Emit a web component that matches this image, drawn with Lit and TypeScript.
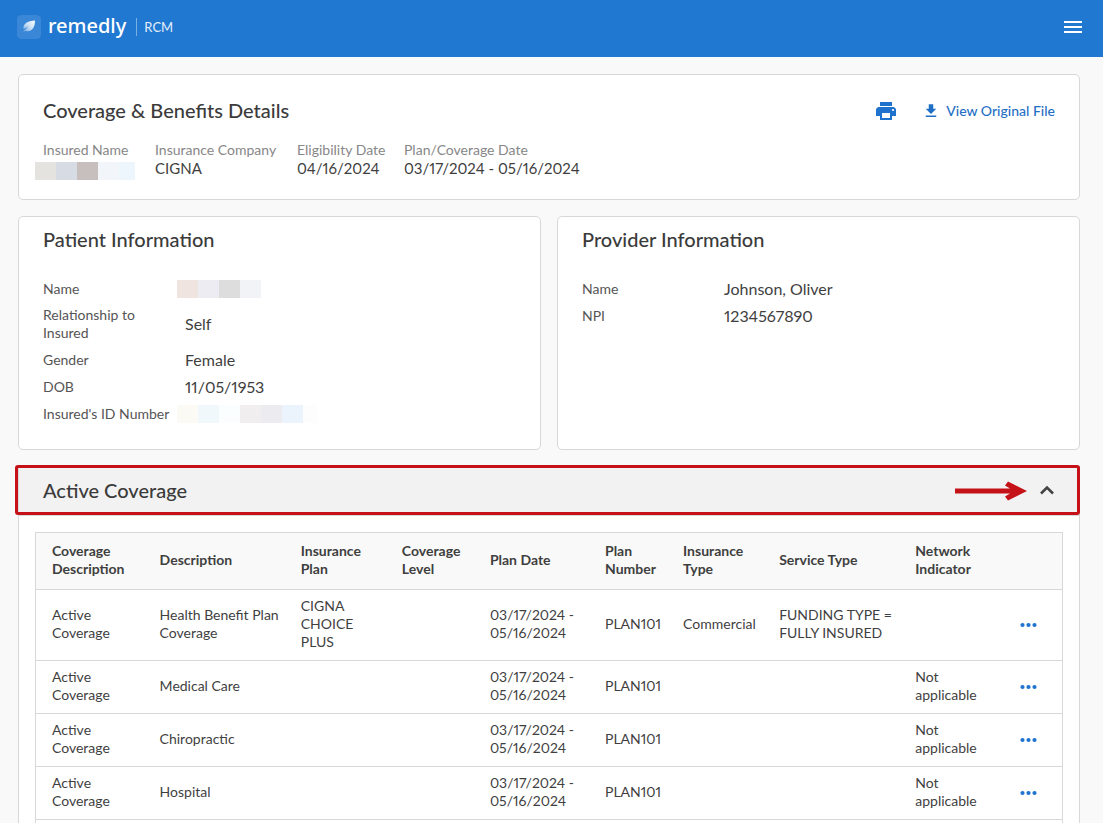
import { LitElement, html, css, svg, nothing } from "lit";
import { customElement, property, state } from "lit/decorators.js";

interface Column {
  label: string;
  weight: number;
}

interface Coverage {
  cells: string[];
}

const COLUMNS: Column[] = [
  { label: "Coverage Description", weight: 108 },
  { label: "Description", weight: 141 },
  { label: "Insurance Plan", weight: 101 },
  { label: "Coverage Level", weight: 88 },
  { label: "Plan Date", weight: 115 },
  { label: "Plan Number", weight: 78 },
  { label: "Insurance Type", weight: 96 },
  { label: "Service Type", weight: 136 },
  { label: "Network Indicator", weight: 96 },
  { label: "", weight: 67 },
];

const TOTAL_WEIGHT = COLUMNS.reduce((sum, c) => sum + c.weight, 0);

const DATES = "03/17/2024 - 05/16/2024";

const ROWS: Coverage[] = [
  {
    cells: [
      "Active Coverage",
      "Health Benefit Plan Coverage",
      "CIGNA CHOICE PLUS",
      "",
      DATES,
      "PLAN101",
      "Commercial",
      "FUNDING TYPE = FULLY INSURED",
      "",
    ],
  },
  { cells: ["Active Coverage", "Medical Care", "", "", DATES, "PLAN101", "", "", "Not applicable"] },
  { cells: ["Active Coverage", "Chiropractic", "", "", DATES, "PLAN101", "", "", "Not applicable"] },
  { cells: ["Active Coverage", "Hospital", "", "", DATES, "PLAN101", "", "", "Not applicable"] },
];

/** A strip of flat colour blocks standing in for hidden personal data. */
@customElement("masked-value")
export class MaskedValue extends LitElement {
  @property({ type: Array }) colors: string[] = [];
  @property({ type: Number }) last = 21;

  static styles = css`
    :host {
      display: flex;
      height: 18px;
    }
    .block {
      width: 21px;
      height: 100%;
    }
  `;

  render() {
    return this.colors.map((c, i) => {
      const width = i === this.colors.length - 1 ? this.last : 21;
      return html`<span class="block" style="background:${c};width:${width}px"></span>`;
    });
  }
}

@customElement("app-root")
export class AppRoot extends LitElement {
  @state() private open = true;

  static styles = css`
    :host {
      display: block;
      height: 100vh;
      overflow: hidden;
      background: #f9f9f9;
      color: #3f3f3f;
      font-family: Lato, "Liberation Sans", sans-serif;
      font-size: 14px;
      line-height: 18px;
      font-variant-numeric: proportional-nums;
    }
    * {
      box-sizing: border-box;
    }
    button {
      display: flex;
      padding: 0;
      border: 0;
      background: none;
      color: inherit;
      font: inherit;
      cursor: pointer;
    }
    svg {
      display: block;
      fill: currentColor;
    }
    h1,
    h2,
    dl,
    dd {
      margin: 0;
    }
    h1,
    h2 {
      font-size: 20px;
      line-height: 24px;
      font-weight: 500;
      color: #3b3b3b;
    }

    .topbar {
      display: flex;
      align-items: center;
      justify-content: space-between;
      height: 57px;
      padding: 0 18px 3px 17px;
      background: #2078d1;
      color: #fff;
    }
    .brand {
      display: flex;
      align-items: center;
      color: inherit;
      text-decoration: none;
    }
    .wordmark {
      margin-left: 7px;
      padding-bottom: 3px;
      font-family: "Noto Sans", sans-serif;
      font-size: 20px;
      line-height: 24px;
      font-weight: 500;
    }
    .product {
      margin-left: 10px;
      padding-left: 7px;
      border-left: 1px solid #79aee3;
      color: #e4effa;
      font-size: 13px;
    }

    main {
      display: flex;
      flex-direction: column;
      gap: 16px;
      padding: 17px 23px 0 18px;
    }
    .card {
      border: 1px solid #d8d8d8;
      border-radius: 5px;
      background: #fff;
    }

    .summary {
      padding: 23px 24px 19px;
    }
    .summary-head {
      display: flex;
      align-items: center;
      justify-content: space-between;
      margin-bottom: 17px;
    }
    .summary-head h1 {
      padding-bottom: 2px;
    }
    .actions {
      display: flex;
      align-items: center;
      gap: 24px;
      color: #1f73cc;
    }
    .file-link {
      display: flex;
      align-items: center;
      gap: 6px;
      color: #1f6fc6;
      font-weight: 500;
      text-decoration: none;
    }
    .facts {
      display: grid;
      grid-template-columns: 92px 122px 87px auto;
      gap: 20px;
      justify-content: start;
      white-space: nowrap;
    }
    .facts dt {
      color: #878787;
    }
    .facts dd {
      display: flow-root;
      height: 21px;
      font-size: 15px;
      line-height: 18px;
    }
    .masked {
      margin-left: -8px;
    }
    .facts .masked {
      margin-top: 3px;
    }

    .people {
      display: grid;
      grid-template-columns: 1fr 1fr;
      gap: 16px;
    }
    .person {
      padding: 10px 24px 22px;
    }
    .person dl {
      display: flex;
      flex-direction: column;
      margin-top: 24px;
    }
    .pair {
      display: grid;
      grid-template-columns: 132px 1fr;
      column-gap: 10px;
      align-items: center;
      min-height: 27px;
      padding: 4px 0;
    }
    .pair dt {
      color: #555;
    }
    .pair dd {
      height: 18px;
      font-size: 16px;
      line-height: 18px;
    }

    .accordion {
      border: 1px solid #d8d8d8;
    }
    .accordion-head {
      position: relative;
      border-bottom: 1px solid #d8d8d8;
      background: #f2f2f2;
    }
    .toggle {
      align-items: center;
      justify-content: space-between;
      width: 100%;
      height: 48px;
      padding: 0 20px 0 24px;
      text-align: left;
    }
    .toggle h2 {
      padding-bottom: 3px;
    }
    .highlight {
      position: absolute;
      inset: -2px -1px 0 -4px;
      border: 3px solid #c51218;
      border-radius: 3px;
      pointer-events: none;
    }
    .pointer {
      position: absolute;
      top: 14px;
      right: 51px;
      color: #c51218;
      pointer-events: none;
    }
    .accordion-body {
      padding: 16px 16px 0;
      background: #fff;
    }

    table {
      width: 100%;
      table-layout: fixed;
      border-collapse: collapse;
      border: 1px solid #d8d8d8;
    }
    th,
    td {
      height: 53px;
      padding: 7px 4px 9px 16px;
      border-bottom: 1px solid #d8d8d8;
      text-align: left;
      vertical-align: middle;
    }
    th {
      padding-top: 9px;
      padding-bottom: 11px;
      background: #f9f9f9;
      font-weight: 700;
    }
    .more {
      margin-left: 9px;
      padding-top: 2px;
      color: #1f73d1;
    }
  `;

  private fact(label: string, value: unknown) {
    return html`<div><dt>${label}</dt><dd>${value}</dd></div>`;
  }

  private pair(label: string, value: unknown) {
    return html`<div class="pair"><dt>${label}</dt><dd>${value}</dd></div>`;
  }

  private mask(colors: string[], last: number) {
    return html`<masked-value class="masked" .colors=${colors} .last=${last}></masked-value>`;
  }

  private dots() {
    return svg`<circle cx="2.5" cy="9" r="2.1"/><circle cx="8.5" cy="9" r="2.1"/><circle cx="14.5" cy="9" r="2.1"/>`;
  }

  render() {
    return html`
      <header class="topbar">
        <a class="brand" href="#">
          <svg width="24" height="24" viewBox="0 0 24 24" aria-hidden="true">
            <defs>
              <linearGradient id="leaf" x1="1" y1="0" x2="0" y2="1">
                <stop offset="0" stop-color="#fff" />
                <stop offset="0.55" stop-color="#c5dcf3" />
                <stop offset="1" stop-color="#6ba5e0" />
              </linearGradient>
            </defs>
            <rect width="24" height="24" rx="4.5" fill="#3a87d7" />
            <path fill="url(#leaf)" d="M18 5.500C12.500 5.800 8 7.600 6.700 11c-.4 1.200-.3 2.200.1 3.100L11.500 11.300L6.300 16.300l.6.500 1.300-1c3 1 6.200-.2 7.900-2.600C17.600 11 17.900 8.500 18 5.500z" />
          </svg>
          <span class="wordmark">remedly</span>
          <span class="product">RCM</span>
        </a>
        <button aria-label="Menu">
          <svg width="24" height="24" viewBox="0 0 24 24">
            <path d="M3 18h18v-2H3v2zm0-5h18v-2H3v2zm0-7v2h18V6H3z" />
          </svg>
        </button>
      </header>

      <main>
        <section class="card summary">
          <div class="summary-head">
            <h1>Coverage &amp; Benefits Details</h1>
            <div class="actions">
              <button aria-label="Print">
                <svg width="24" height="24" viewBox="0 0 24 24">
                  <path d="M19 8H5c-1.660 0-3 1.340-3 3v6h4v4h12v-4h4v-6c0-1.660-1.340-3-3-3zm-3 11H8v-5h8v5zm3-7c-.55 0-1-.45-1-1s.45-1 1-1 1 .45 1 1-.45 1-1 1zm-1-9H6v4h12V3z" />
                </svg>
              </button>
              <a class="file-link" href="#">
                <svg width="18" height="18" viewBox="0 0 24 24" aria-hidden="true">
                  <path d="M19 9h-4V3H9v6H5l7 7 7-7zM5 18v2h14v-2H5z" />
                </svg>
                View Original File
              </a>
            </div>
          </div>
          <dl class="facts">
            ${this.fact("Insured Name", this.mask(["#e4e3e0", "#d7dce4", "#c6bfbd", "#f2f5f9", "#edf5fd"], 16))}
            ${this.fact("Insurance Company", "CIGNA")}
            ${this.fact("Eligibility Date", "04/16/2024")}
            ${this.fact("Plan/Coverage Date", DATES)}
          </dl>
        </section>

        <div class="people">
          <section class="card person">
            <h2>Patient Information</h2>
            <dl>
              ${this.pair("Name", this.mask(["#f0e4e0", "#ececf2", "#dddddd", "#f2f3f6"], 21))}
              ${this.pair("Relationship to Insured", "Self")}
              ${this.pair("Gender", "Female")}
              ${this.pair("DOB", "11/05/1953")}
              ${this.pair(
                "Insured's ID Number",
                this.mask(["#fbfaf5", "#f0f8fc", "#fbfeff", "#f0eeef", "#ececf0", "#ebf4fc", "#fdfdfe"], 14),
              )}
            </dl>
          </section>
          <section class="card person">
            <h2>Provider Information</h2>
            <dl>
              ${this.pair("Name", "Johnson, Oliver")} ${this.pair("NPI", "1234567890")}
            </dl>
          </section>
        </div>

        <section class="accordion">
          <div class="accordion-head">
            <button class="toggle" aria-expanded=${this.open} @click=${() => (this.open = !this.open)}>
              <h2>Active Coverage</h2>
              <svg width="24" height="24" viewBox="0 0 24 24" aria-hidden="true">
                <path d="M6 14.500L12 8.500L18 14.500" fill="none" stroke="#444" stroke-width="2.600" />
              </svg>
            </button>
            <svg class="pointer" width="74" height="20" viewBox="0 0 74 20" aria-hidden="true">
              <path d="M1 7.500H56L51 4.500L54 .5L73 10L54 19.500L51 15.500L56 12.500H1z" />
            </svg>
            <div class="highlight"></div>
          </div>
          ${this.open ? this.renderTable() : nothing}
        </section>
      </main>
    `;
  }

  private renderTable() {
    return html`
      <div class="accordion-body">
        <table>
          <colgroup>
            ${COLUMNS.map((c) => html`<col style="width:${(c.weight / TOTAL_WEIGHT) * 100}%" />`)}
          </colgroup>
          <thead>
            <tr>
              ${COLUMNS.map((c) => (c.label ? html`<th scope="col">${c.label}</th>` : html`<th></th>`))}
            </tr>
          </thead>
          <tbody>
            ${ROWS.map(
              (row) => html`
                <tr>
                  ${row.cells.map((cell) => html`<td>${cell}</td>`)}
                  <td>
                    <button class="more" aria-label="More details">
                      <svg width="17" height="18" viewBox="0 0 17 18">${this.dots()}</svg>
                    </button>
                  </td>
                </tr>
              `,
            )}
            <tr>
              ${COLUMNS.map(() => html`<td></td>`)}
            </tr>
          </tbody>
        </table>
      </div>
    `;
  }
}
